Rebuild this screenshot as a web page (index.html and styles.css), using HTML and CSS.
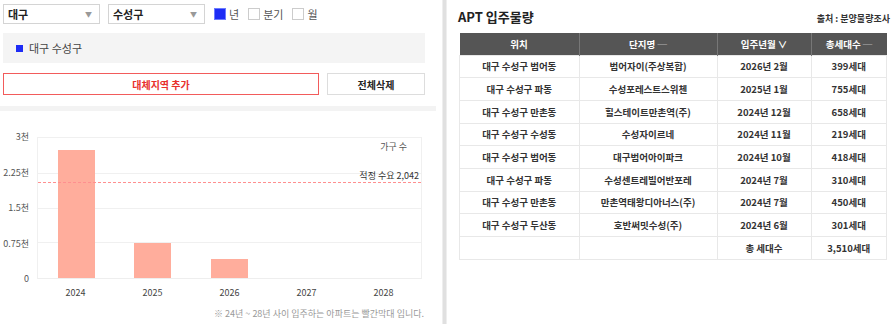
FILE: index.html
```html
<html>

<head>
	<link rel="stylesheet" href="styles.css">
</head>

<body>
	<div class="wrap">
		<div class="left">
			<div class="controls">
				<div class="select sel-city"><span>대구</span><span class="arrow">▼</span></div>
				<div class="select sel-gu"><span>수성구</span><span class="arrow">▼</span></div>
				<label class="check"><span class="box on"></span>년</label>
				<label class="check"><span class="box"></span>분기</label>
				<label class="check"><span class="box"></span>월</label>
			</div>

			<div class="region-box">
				<span class="legend"></span>대구 수성구
			</div>

			<div class="buttons">
				<button type="button" class="btn-add">대체지역 추가</button>
				<button type="button" class="btn-clear">전체삭제</button>
			</div>

			<div class="strip"></div>

			<div class="chart">
				<div class="y-axis">
					<span>3천</span>
					<span>2.25천</span>
					<span>1.5천</span>
					<span>0.75천</span>
					<span>0</span>
				</div>
				<div class="plot-wrap">
					<div class="plot">
						<div class="unit">가구 수</div>
						<div class="demand" style="bottom: 68.07%;">
							<span class="demand-label">적정 수요 2,042</span>
						</div>
						<div class="col"><div class="bar" style="height: 91.5%;"></div></div>
						<div class="col"><div class="bar" style="height: 25.2%;"></div></div>
						<div class="col"><div class="bar" style="height: 13.3%;"></div></div>
						<div class="col"></div>
						<div class="col"></div>
					</div>
					<div class="x-axis">
						<span>2024</span>
						<span>2025</span>
						<span>2026</span>
						<span>2027</span>
						<span>2028</span>
					</div>
				</div>
			</div>
			<p class="note">※ 24년 ~ 28년 사이 입주하는 아파트는 빨간막대 입니다.</p>
		</div>

		<div class="divider"></div>

		<div class="right">
			<div class="title-row">
				<h2>APT 입주물량</h2>
				<span class="source">출처 : 분양물량조사</span>
			</div>
			<table class="supply">
				<thead>
					<tr>
						<th class="c-loc">위치</th>
						<th class="c-name">단지명 ─</th>
						<th class="c-date">입주년월 ∨</th>
						<th class="c-total">총세대수 ─</th>
					</tr>
				</thead>
				<tbody>
					<tr><td>대구 수성구 범어동</td><td>범어자이(주상복합)</td><td>2026년 2월</td><td>399세대</td></tr>
					<tr><td>대구 수성구 파동</td><td>수성포레스트스위첸</td><td>2025년 1월</td><td>755세대</td></tr>
					<tr><td>대구 수성구 만촌동</td><td>힐스테이트만촌역(주)</td><td>2024년 12월</td><td>658세대</td></tr>
					<tr><td>대구 수성구 수성동</td><td>수성자이르네</td><td>2024년 11월</td><td>219세대</td></tr>
					<tr><td>대구 수성구 범어동</td><td>대구범어아이파크</td><td>2024년 10월</td><td>418세대</td></tr>
					<tr><td>대구 수성구 파동</td><td>수성센트레빌어반포레</td><td>2024년 7월</td><td>310세대</td></tr>
					<tr><td>대구 수성구 만촌동</td><td>만촌역태왕디아너스(주)</td><td>2024년 7월</td><td>450세대</td></tr>
					<tr><td>대구 수성구 두산동</td><td>호반써밋수성(주)</td><td>2024년 6월</td><td>301세대</td></tr>
					<tr><td></td><td></td><td>총 세대수</td><td>3,510세대</td></tr>
				</tbody>
			</table>
		</div>
	</div>
</body>

</html>
```

FILE: styles.css
```css
body {
	margin: 0;
	font-family: "Noto Sans CJK KR", "Noto Sans", sans-serif;
	color: #333;
	background-color: #fff;
	overflow: hidden;
}

.wrap {
	display: flex;
	height: 324px;
}

/* left panel */
.left {
	width: 436px;
	padding-top: 4px;
}

.controls {
	display: flex;
	align-items: center;
	margin-left: 3px;
	height: 20px;
}

.select {
	box-sizing: border-box;
	display: flex;
	justify-content: space-between;
	align-items: center;
	width: 97px;
	height: 20px;
	padding: 0 7px 0 4px;
	border: 1px solid #d4d4d4;
	font-size: 11px;
	font-weight: bold;
	color: #222;
}

.sel-gu {
	margin-left: 8px;
}

.arrow {
	font-size: 7px;
	color: #999;
}

.check {
	display: flex;
	align-items: center;
	gap: 3px;
	font-size: 11px;
	color: #555;
	margin-left: 9px;
}

.box {
	box-sizing: border-box;
	width: 12px;
	height: 12px;
	border: 1px solid #ccc;
	background-color: #fff;
}

.box.on {
	background-color: #1d2cf5;
	border-color: #6b7bff;
}

.region-box {
	box-sizing: border-box;
	display: flex;
	align-items: center;
	margin: 9px 11px 0 3px;
	height: 30px;
	padding-left: 13px;
	background-color: #f4f4f4;
	font-size: 11px;
	color: #444;
}

.legend {
	width: 7px;
	height: 7px;
	background-color: #1d2cf5;
	margin-right: 6px;
}

.buttons {
	display: flex;
	gap: 8px;
	margin: 10px 11px 0 3px;
}

.buttons button {
	box-sizing: border-box;
	height: 22px;
	background-color: #fff;
	font-family: inherit;
	font-size: 10px;
	font-weight: bold;
	cursor: pointer;
}

.btn-add {
	width: 316px;
	border: 1px solid #f25b5b;
	color: #e8302c;
}

.btn-clear {
	flex: 1;
	border: 1px solid #ddd;
	color: #222;
}

.strip {
	height: 5px;
	margin-top: 11px;
	background-color: #f3f3f3;
}

.chart {
	display: flex;
	padding-top: 20px;
}

.y-axis {
	display: flex;
	flex-direction: column;
	justify-content: space-between;
	align-items: flex-end;
	width: 29px;
	height: 154px;
	margin-right: 8px;
	font-size: 9px;
	line-height: 12px;
	color: #555;
}

.plot-wrap {
	width: 385px;
	padding-top: 6px;
}

.plot {
	position: relative;
	display: flex;
	align-items: flex-end;
	height: 142px;
	border-left: 1px solid #f0f0f0;
	border-right: 1px solid #f0f0f0;
	border-top: 1px solid #f0f0f0;
	border-bottom: 1px solid #eee;
	box-sizing: border-box;
	background:
		linear-gradient(#f0f0f0, #f0f0f0) 0 25% / 100% 1px no-repeat,
		linear-gradient(#f0f0f0, #f0f0f0) 0 50% / 100% 1px no-repeat,
		linear-gradient(#f0f0f0, #f0f0f0) 0 75% / 100% 1px no-repeat;
}

.col {
	flex: 1;
	height: 100%;
	display: flex;
	justify-content: center;
	align-items: flex-end;
}

.bar {
	width: 37px;
	background-color: #ffad9c;
}

.unit {
	position: absolute;
	top: 2px;
	right: 14px;
	font-size: 9px;
	color: #555;
}

.demand {
	position: absolute;
	left: 0;
	right: 0;
	border-top: 1px dashed #ff8f8f;
}

.demand-label {
	position: absolute;
	right: 2px;
	bottom: 1px;
	font-size: 9px;
	color: #333;
	white-space: nowrap;
}

.x-axis {
	display: flex;
	margin-top: 7px;
}

.x-axis span {
	flex: 1;
	text-align: center;
	font-size: 9px;
	color: #444;
}

.note {
	margin: 8px 12px 0 0;
	text-align: right;
	font-size: 9px;
	color: #999;
}

.divider {
	width: 3px;
	margin-left: 6px;
	background-color: #e0e0e0;
	border-left: 1px solid #eee;
	border-right: 1px solid #eee;
}

/* right panel */
.right {
	flex: 1;
	padding: 0 6px 0 12px;
}

.title-row {
	display: flex;
	justify-content: space-between;
	align-items: flex-end;
	height: 26px;
}

h2 {
	margin: 0;
	font-size: 13px;
	font-weight: bold;
	color: #222;
	line-height: 18px;
	margin-left: -1px;
}

.source {
	font-size: 9px;
	color: #333;
	font-weight: bold;
	margin-right: -3px;
	line-height: 14px;
}

.supply {
	width: 100%;
	margin-top: 7px;
	border-collapse: collapse;
	font-size: 9.5px;
	font-weight: bold;
	color: #333;
}

.supply th {
	height: 22px;
	padding: 0;
	background-color: #555;
	color: #fff;
	font-weight: bold;
	border-left: 1px solid #777;
}

.supply th:first-child {
	border-left: none;
}

.supply td {
	height: 22.7px;
	padding: 0;
	text-align: center;
	border: 1px solid #e8e8e8;
}

.c-loc {
	width: 119px;
}

.c-name {
	width: 137px;
}

.c-date {
	width: 93px;
}
```
